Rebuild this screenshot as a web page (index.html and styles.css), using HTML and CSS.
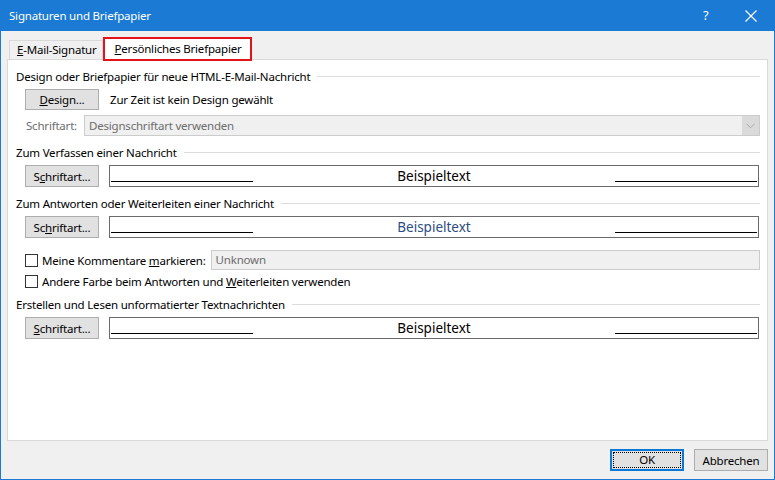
FILE: index.html
```html
<!DOCTYPE html>
<html lang="de">
<head>
<meta charset="utf-8">
<title>Signaturen und Briefpapier</title>
<link rel="stylesheet" href="styles.css">
</head>
<body>
<div class="window">
  <div class="titlebar">
    <span class="title">Signaturen und Briefpapier</span>
    <span class="help">?</span>
    <span class="close"><svg width="12" height="12" viewBox="0 0 12 12"><path d="M0.5 0.5 L11.5 11.5 M11.5 0.5 L0.5 11.5" stroke="#fff" stroke-width="1.2" fill="none"/></svg></span>
  </div>
  <div class="client">
    <div class="tabs">
      <div class="tab"><u>E</u>-Mail-Signatur</div>
      <div class="tab active"><u>P</u>ersönliches Briefpapier</div>
    </div>
    <div class="panel">
      <div class="group-title"><span>Design oder Briefpapier für neue HTML-E-Mail-Nachricht</span><i class="rule"></i></div>
      <div class="row r-design">
        <button class="btn"><u>D</u>esign...</button>
        <span class="info">Zur Zeit ist kein Design gewählt</span>
      </div>
      <div class="row r-font">
        <span class="lbl-disabled">Schriftart:</span>
        <div class="select">
          <span>Designschriftart verwenden</span>
          <span class="drop"><svg width="9" height="6" viewBox="0 0 9 6"><path d="M0.5 0.8 L4.5 4.8 L8.5 0.8" stroke="#a8a8a8" stroke-width="1" fill="none"/></svg></span>
        </div>
      </div>

      <div class="group-title g2"><span>Zum Verfassen einer Nachricht</span><i class="rule"></i></div>
      <div class="row r-prev">
        <button class="btn">S<u>c</u>hriftart...</button>
        <div class="preview"><i class="ul"></i><span class="sample">Beispieltext</span><i class="ul"></i></div>
      </div>

      <div class="group-title g2"><span>Zum Antworten oder Weiterleiten einer Nachricht</span><i class="rule"></i></div>
      <div class="row r-prev">
        <button class="btn">Sc<u>h</u>riftart...</button>
        <div class="preview"><i class="ul"></i><span class="sample blue">Beispieltext</span><i class="ul"></i></div>
      </div>

      <div class="row r-check1">
        <span class="cb"></span>
        <span class="cb-label">Meine Kommentare <u>m</u>arkieren:</span>
        <div class="input-disabled">Unknown</div>
      </div>
      <div class="row r-check2">
        <span class="cb"></span>
        <span class="cb-label">Andere Farbe beim Antworten und <u>W</u>eiterleiten verwenden</span>
      </div>

      <div class="group-title g4"><span>Erstellen und Lesen unformatierter Textnachrichten</span><i class="rule"></i></div>
      <div class="row r-prev">
        <button class="btn"><u>S</u>chriftart...</button>
        <div class="preview"><i class="ul"></i><span class="sample">Beispieltext</span><i class="ul"></i></div>
      </div>
    </div>
    <div class="footer">
      <button class="btn btn-ok"><span class="focus">OK</span></button>
      <button class="btn btn-cancel">Abbrechen</button>
    </div>
  </div>
</div>
</body>
</html>
```

FILE: styles.css
```css
html, body {
  margin: 0;
  padding: 0;
}
body {
  width: 775px;
  height: 480px;
  overflow: hidden;
  font-family: "Noto Sans", "Segoe UI", sans-serif;
  font-size: 11.5px;
  letter-spacing: -0.2px;
  color: #000;
}
.window {
  box-sizing: border-box;
  width: 775px;
  height: 480px;
  background: #f0f0f0;
  border: 1px solid #1a7ad4;
  border-top: none;
  display: flex;
  flex-direction: column;
}
.titlebar {
  height: 31px;
  background: #1a7ad4;
  color: #fff;
  display: flex;
  align-items: center;
  flex-shrink: 0;
}
.title {
  padding-left: 8px;
  font-size: 11.5px;
  flex: 1;
  padding-bottom: 1px;
}
.help {
  font-size: 13px;
  width: 12px;
  margin-right: 30px;
  padding-bottom: 2px;
}
.close {
  display: flex;
  margin-right: 17px;
}
.client {
  flex: 1;
  display: flex;
  flex-direction: column;
  padding: 6px 6px 0 6px;
}
.tabs {
  height: 22px;
  display: flex;
  align-items: flex-end;
  padding-left: 2px;
}
.tab {
  box-sizing: border-box;
  height: 19px;
  border: 1px solid #d9d9d9;
  border-bottom: none;
  padding: 0 5px 0 7px;
  line-height: 18px;
  background: #f0f0f0;
}
.tab.active {
  position: relative;
  z-index: 1;
  height: 24px;
  margin-bottom: -2px;
  background: #fff;
  border: 2px solid #e3131b;
  padding: 0 8px 0 10px;
  line-height: 20px;
}
.panel {
  box-sizing: border-box;
  height: 382px;
  background: #fff;
  border: 1px solid #d9d9d9;
  padding: 8px 8px 0 8px;
  display: flex;
  flex-direction: column;
}
.group-title {
  height: 16px;
  display: flex;
  align-items: center;
  white-space: nowrap;
}
.group-title.g2 { margin-top: 8px; }
.group-title.g4 { margin-top: 7px; }
.rule {
  flex: 1;
  height: 1px;
  background: #dcdcdc;
  margin-left: 7px;
  margin-right: -1px;
}
.row {
  display: flex;
  align-items: center;
  margin-left: 9px;
}
.btn {
  box-sizing: border-box;
  width: 74px;
  height: 21px;
  background: #e1e1e1;
  border: 1px solid #adadad;
  font-family: inherit;
  font-size: 11.5px;
  letter-spacing: -0.2px;
  color: #000;
  padding: 0;
  margin: 0;
}
.r-design {
  margin-top: 5px;
  height: 21px;
}
.info {
  margin-left: 11px;
}
.r-font {
  margin-top: 5px;
  height: 21px;
}
.lbl-disabled {
  color: #6d6d6d;
  margin-left: 1px;
  width: 58px;
}
.select {
  box-sizing: border-box;
  flex: 1;
  height: 21px;
  margin-right: -1px;
  border: 1px solid #cccccc;
  background: #f0f0f0;
  color: #6d6d6d;
  display: flex;
  align-items: center;
  padding-left: 4px;
}
.select span:first-child { flex: 1; }
.drop {
  width: 17px;
  height: 19px;
  background: #dadada;
  display: flex;
  align-items: center;
  justify-content: center;
}
.r-prev {
  margin-top: 5px;
  height: 22px;
}
.r-prev .btn { height: 22px; }
.preview {
  box-sizing: border-box;
  flex: 1;
  height: 22px;
  margin-left: 10px;
  border: 1px solid #6b6b6b;
  display: flex;
  align-items: center;
  padding: 0 1px;
}
.ul {
  width: 142px;
  height: 1px;
  background: #000;
  align-self: flex-end;
  margin-bottom: 4px;
}
.sample {
  flex: 1;
  text-align: center;
  font-size: 13.5px;
  letter-spacing: 0;
  padding-bottom: 1px;
}
.sample.blue { color: #2c4d82; }
.r-check1 {
  margin-top: 12px;
  height: 20px;
}
.cb {
  box-sizing: border-box;
  width: 13px;
  height: 13px;
  border: 1px solid #333;
  background: #fff;
  flex-shrink: 0;
}
.cb-label {
  margin-left: 4px;
}
.input-disabled {
  box-sizing: border-box;
  flex: 1;
  height: 20px;
  margin-left: 5px;
  margin-right: -1px;
  border: 1px solid #cccccc;
  background: #f0f0f0;
  color: #6d6d6d;
  padding-left: 4px;
  line-height: 18px;
}
.r-check2 {
  margin-top: 3px;
  height: 16px;
}
.footer {
  display: flex;
  justify-content: flex-end;
  padding-top: 8px;
  gap: 10px;
}
.footer .btn {
  height: 22px;
  width: 74px;
}
.btn-ok {
  border: 2px solid #0a78d4;
  padding: 1px;
  display: flex;
}
.focus {
  flex: 1;
  border: 1px dotted #000;
  line-height: 14px;
}
```
